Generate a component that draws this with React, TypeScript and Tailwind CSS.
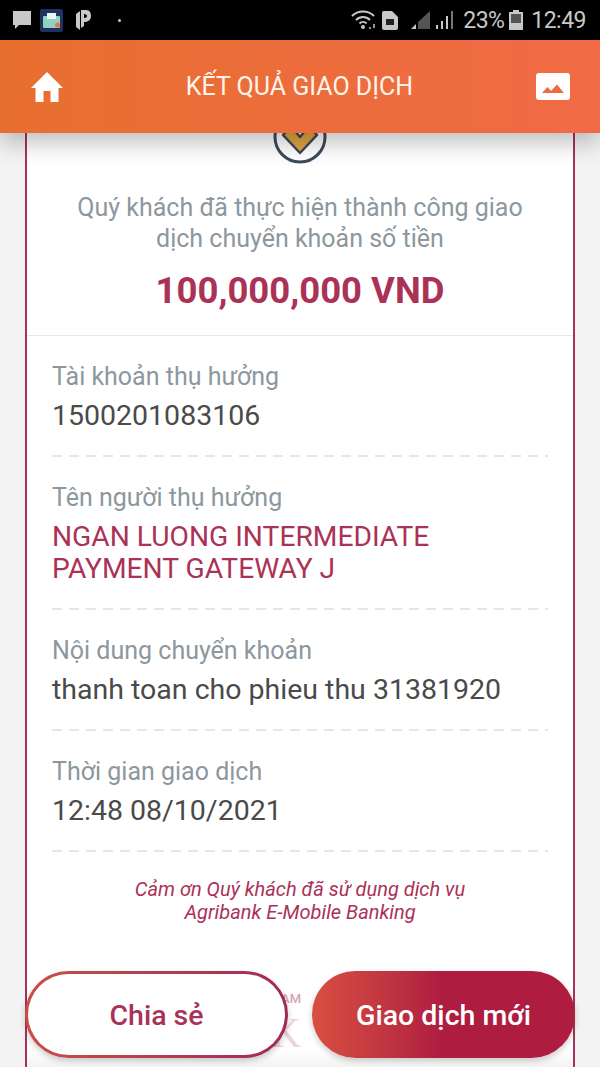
const ROBOTO = "font-['Roboto',sans-serif]";

function HomeIcon() {
  return (
    <svg width="32" height="32" viewBox="0 0 32 32" fill="#fff">
      <path d="M16 1 L32 17 H27.5 V31 H19.5 V20 H12.5 V31 H4.5 V17 H0 Z" />
    </svg>
  );
}

function PictureIcon() {
  return (
    <svg width="34" height="27" viewBox="0 0 34 27">
      <rect width="34" height="27" rx="3" fill="#fff" />
      <path d="M6 20 L11.5 14 L15 18 L21 11.5 L28 20 Z" fill="#ef6a42" />
    </svg>
  );
}

function CheckBadge() {
  return (
    <svg width="54" height="54" viewBox="0 0 54 54" fill="none">
      <circle cx="27" cy="27" r="25" stroke="#3d4a5c" strokeWidth="3" />
      <path d="M10 25 L27 43 L44 25 L36 16 L27 27 L18 16 Z" fill="#e0a63f" stroke="#3d4a5c" strokeWidth="2.5" strokeLinejoin="round" />
    </svg>
  );
}

function StatusBar() {
  return (
    <div className="flex h-10 items-center justify-between bg-black pl-3 pr-3.5">
      <div className="flex items-center gap-2">
        <svg width="20" height="20" viewBox="0 0 20 20" fill="#c9c9c9">
          <path d="M1 1 H19 V15 H7 L3 19 V15 H1 Z" />
        </svg>
        <svg width="23" height="23" viewBox="0 0 23 23">
          <rect width="23" height="23" rx="2" fill="#1f3264" />
          <rect x="3" y="7" width="17" height="12" rx="1" fill="#8fd3c0" />
          <rect x="7" y="4" width="9" height="6" fill="#eef2f5" />
          <circle cx="17.5" cy="16" r="2.5" fill="#e8764a" />
        </svg>
        <svg className="ml-1" width="16" height="22" viewBox="0 0 16 22" fill="#c9c9c9">
          <path d="M1 5 L5 2 V21 L1 18 Z" />
          <path d="M6 1 H11 C15 1 16 4 16 7 C16 11 13 13 9 13 V17 L6 19 Z M9 5 V9 C11 9 12 8 12 7 C12 6 11 5 9 5 Z" />
        </svg>
        <div className="ml-[19px] size-[3px] rounded-full bg-[#c9c9c9]" />
      </div>
      <div className={`${ROBOTO} flex items-center text-[23px] leading-none text-[#c9c9c9]`}>
        <svg width="26" height="22" viewBox="0 0 26 22" fill="none" stroke="#c9c9c9" strokeWidth="2">
          <path d="M1 7 C7 1 17 1 23 7" />
          <path d="M5 11 C9 7 15 7 19 11" />
          <path d="M8.5 14.5 C10.5 12.5 13.5 12.5 15.5 14.5" />
          <circle cx="12" cy="18" r="1" fill="#c9c9c9" />
          <path d="M18 19 H20 M23 19 V15" strokeWidth="1.5" />
        </svg>
        <svg className="ml-1" width="18" height="21" viewBox="0 0 18 21">
          <path d="M1 3 Q1 1 3 1 H11 L17 7 V18 Q17 20 15 20 H3 Q1 20 1 18 Z" fill="#c9c9c9" />
          <rect x="5" y="9" width="8" height="6" fill="#222" />
        </svg>
        <svg className="ml-3" width="20" height="20" viewBox="0 0 20 20">
          <path d="M5 14 V19 H0 Z" fill="#c9c9c9" />
          <path d="M7 12 L19 1 V19 H7 Z" fill="#555" />
        </svg>
        <svg className="ml-1" width="20" height="20" viewBox="0 0 20 20" fill="#c9c9c9">
          <rect x="1" y="15" width="2" height="4" />
          <rect x="6" y="11" width="2" height="8" />
          <rect x="11" y="6" width="2" height="13" />
          <rect x="16" y="1" width="2" height="18" fill="#777" />
        </svg>
        <span className="ml-[8px] w-[40px] tracking-[-0.5px]">23%</span>
        <svg className="ml-1.5" width="14" height="20" viewBox="0 0 14 20">
          <path d="M4 0 H10 V2 H14 V20 H0 V2 H4 Z" fill="#c9c9c9" />
          <rect x="2" y="4" width="10" height="9" fill="#555" />
        </svg>
        <span className="ml-2 tracking-[-0.5px]">12:49</span>
      </div>
    </div>
  );
}

function Field({ label, value, accent }: { label: string; value: string; accent?: boolean }) {
  return (
    <div className="pt-[25px]">
      <div className="text-[25px] leading-[32px] text-[#8c979e]">{label}</div>
      <div className={`mt-[7px] leading-[32px] ${accent ? 'text-[28.2px] text-[#ab3257]' : 'text-[28.5px] text-[#4a4a4a]'}`}>{value}</div>
      <div className="mt-[23px] h-[2px] bg-[repeating-linear-gradient(90deg,#e4e6e8_0_10px,transparent_10px_17px)]" />
    </div>
  );
}

export default function App() {
  return (
    <div className={`${ROBOTO} relative flex h-[1067px] w-[600px] flex-col overflow-hidden bg-[#f3f3f3]`}>
      <StatusBar />
      <div className="relative z-10 flex h-[93px] items-center justify-between bg-gradient-to-r from-[#e76f2f] to-[#f16a45] pl-[31px] pr-[30px] shadow-[0_8px_24px_rgba(0,0,0,0.28)]">
        <HomeIcon />
        <div className="text-[25px] text-[#fff3ea]">KẾT QUẢ GIAO DỊCH</div>
        <PictureIcon />
      </div>
      <div className="relative mx-[25px] flex min-h-0 flex-1 flex-col overflow-hidden border-x-2 border-[#a8325c] bg-white">
        <div className="-mt-[23px] flex justify-center">
          <CheckBadge />
        </div>
        <div className="border-b border-[#e6e8ea] pb-[23px] text-center">
          <div className="mt-[28px] text-[25px] leading-[31px] text-[#8c979e]">
            Quý khách đã thực hiện thành công giao
            <br />
            dịch chuyển khoản số tiền
          </div>
          <div className="mt-[16px] text-[36.5px] font-bold leading-[42px] text-[#ab3257]">100,000,000 VND</div>
        </div>
        <div className="px-[25px]">
          <Field label="Tài khoản thụ hưởng" value="1500201083106" />
          <Field label="Tên người thụ hưởng" value="NGAN LUONG INTERMEDIATE PAYMENT GATEWAY J" accent />
          <Field label="Nội dung chuyển khoản" value="thanh toan cho phieu thu 31381920" />
          <Field label="Thời gian giao dịch" value="12:48 08/10/2021" />
        </div>
        <div className="mt-[26px] text-center text-[20px] italic leading-[23px] text-[#ab3257]">
          Cảm ơn Quý khách đã sử dụng dịch vụ
          <br />
          Agribank E-Mobile Banking
        </div>
        <div className="mt-[69px] pr-[272px] text-right">
          <div className="text-[13px] font-medium leading-[12px] text-[#d6a3b3]">NAM</div>
          <div className="mt-[10px] font-['Liberation_Serif',serif] text-[42px] leading-[36px] text-[#ecd5dc]">K</div>
        </div>
        <div className="absolute inset-x-0 bottom-0 h-4 bg-gradient-to-b from-transparent to-[#f3f3f3]" />
      </div>
      <div className="absolute left-[25px] top-[971px] flex w-[550px] gap-[24px]">
        <div className="h-[87px] w-[263px] rounded-full bg-gradient-to-r from-[#c94f45] to-[#a02a55] p-[3px] shadow-[0_3px_6px_rgba(0,0,0,0.2)]">
          <button className="size-full rounded-full bg-white pt-1 text-[28.5px] font-medium text-[#a83359]">
            Chia sẻ
          </button>
        </div>
        <button className="h-[87px] w-[263px] rounded-full bg-gradient-to-r from-[#d94f40] via-[#ae1c40] via-50% to-[#ae1c40] pt-1 text-[28.5px] font-medium text-white shadow-[0_3px_6px_rgba(0,0,0,0.2)]">
          Giao dịch mới
        </button>
      </div>
    </div>
  );
}
